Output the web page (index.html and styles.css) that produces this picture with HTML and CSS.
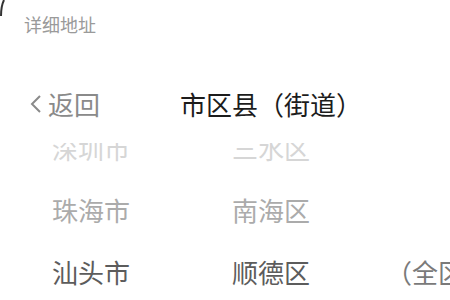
FILE: index.html
```html
<!DOCTYPE html>
<html>
<head>
    <title>选择地址</title>
    <link rel="stylesheet" href="styles.css">
</head>
<body>
    <svg class="corner" width="6" height="16" viewBox="0 0 6 16"><path d="M4 0 Q1 6 1 16" fill="none" stroke="#333" stroke-width="2"/></svg>
    <div class="field-label">详细地址</div>
    <div class="tab-bar">
        <div class="back">
            <svg width="14" height="20" viewBox="0 0 14 20"><path d="M11 2 L3 10 L11 18" fill="none" stroke="#8a8a8a" stroke-width="2"/></svg>
            <span>返回</span>
        </div>
        <div class="tab-title">市区县（街道）</div>
    </div>
    <div class="picker">
        <div class="picker-list">
            <div class="row faint">
                <span>深圳市</span><span>三水区</span><span></span>
            </div>
            <div class="row light">
                <span>珠海市</span><span>南海区</span><span></span>
            </div>
            <div class="row active">
                <span>汕头市</span><span>顺德区</span><span class="all">（全区）</span>
            </div>
            <div class="row light">
                <span>佛山市</span><span>高明区</span><span></span>
            </div>
        </div>
    </div>
</body>
</html>
```

FILE: styles.css
```css
body {
    margin: 0;
    background-color: #ffffff;
    font-family: "Noto Sans CJK SC", "Noto Sans", sans-serif;
    width: 450px;
    height: 300px;
    overflow: hidden;
    position: relative;
}
.corner {
    position: absolute;
    left: 0;
    top: 0;
}
.field-label {
    padding: 15px 0 0 24px;
    font-size: 18px;
    line-height: 18px;
    color: #9a9a9a;
}
.tab-bar {
    margin-top: 41px;
    height: 60px;
    display: flex;
    align-items: center;
    font-size: 26px;
    line-height: 26px;
}
.back {
    display: flex;
    align-items: center;
    gap: 5px;
    padding-left: 29px;
    width: 151px;
    color: #8a8a8a;
}
.tab-title {
    color: #1c1c1c;
}
.picker {
    margin-top: 9px;
    height: 160px;
    overflow: hidden;
}
.picker-list {
    margin-top: -26px;
}
.row {
    display: grid;
    grid-template-columns: 180px 154px 1fr;
    padding-left: 52px;
    height: 62px;
    line-height: 62px;
    font-size: 26px;
    white-space: nowrap;
}
.row.faint {
    color: #d6d6d6;
}
.row.light {
    color: #ababab;
}
.row.active {
    color: #5c5c5c;
}
.row .all {
    color: #7a7a7a;
}
```
